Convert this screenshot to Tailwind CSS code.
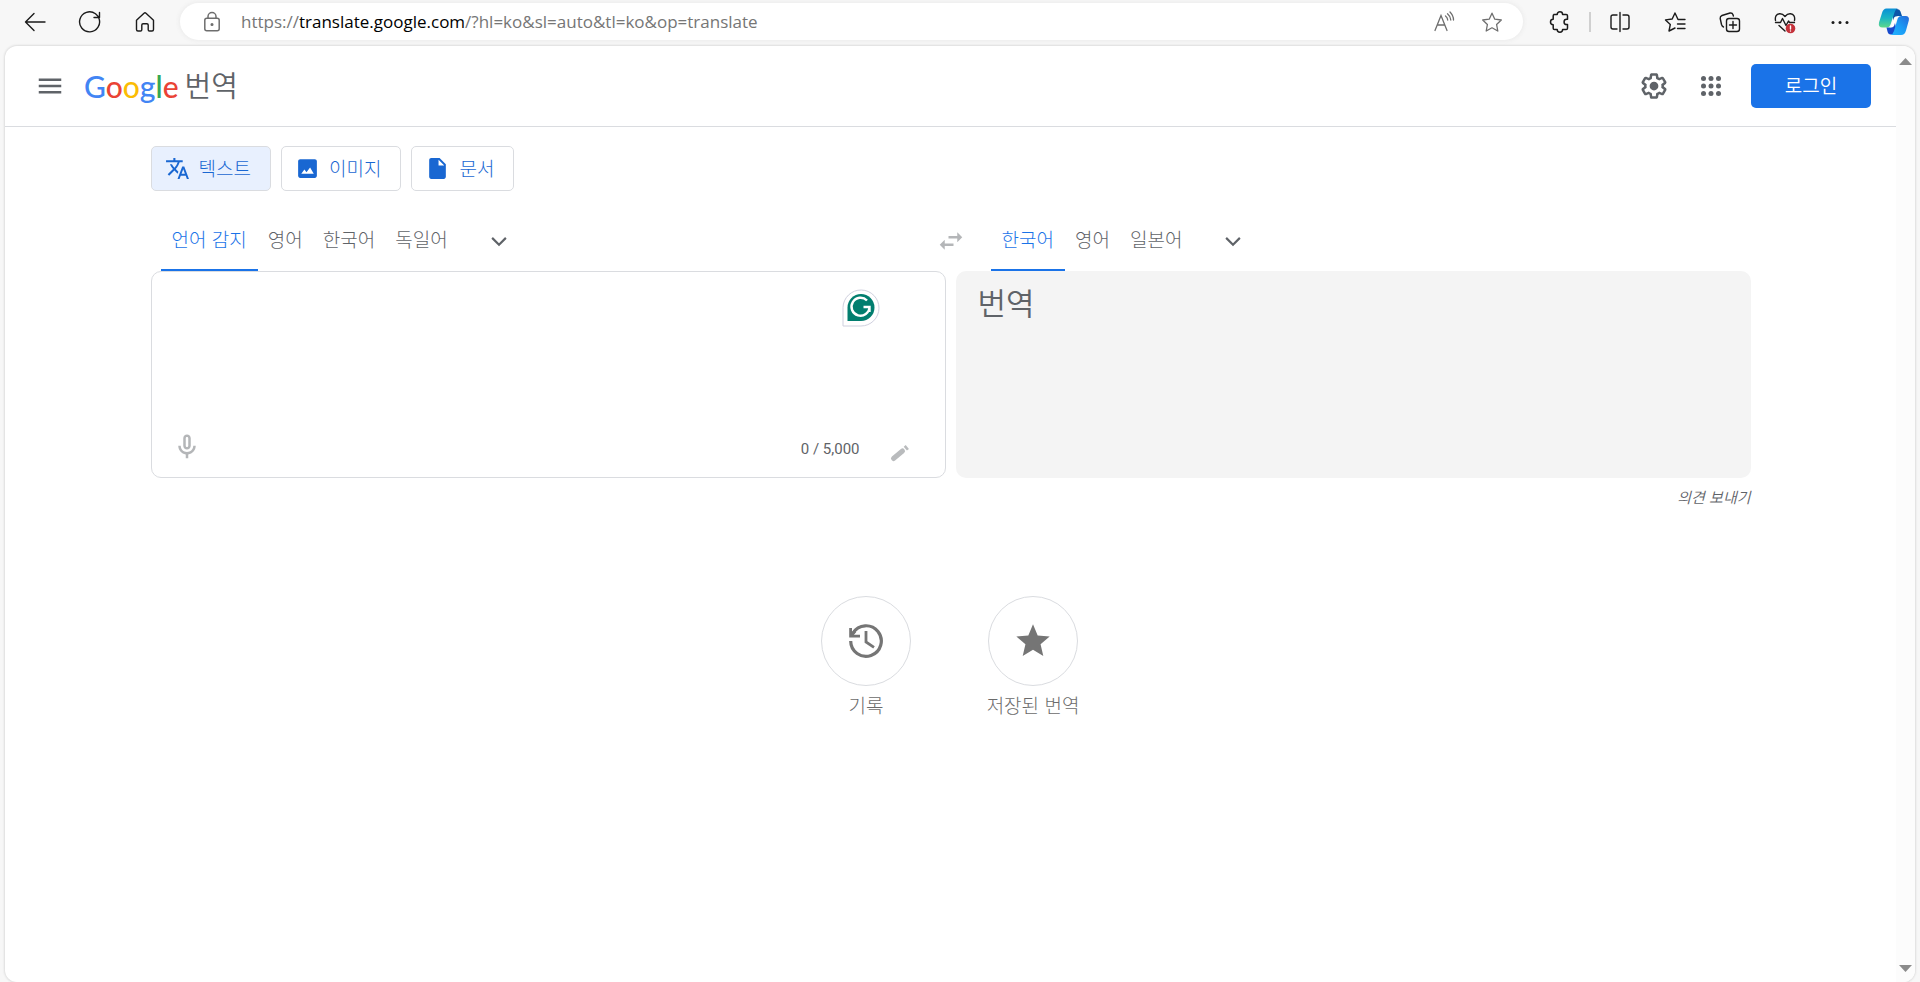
<!DOCTYPE html>
<html lang="ko">
<head>
<meta charset="utf-8">
<title>Google 번역</title>
<script src="https://cdn.jsdelivr.net/npm/@tailwindcss/browser@4"></script>
</head>
<body class="h-screen flex flex-col bg-[#f7f7f7] overflow-hidden font-['Noto_Sans_CJK_KR',sans-serif] text-[#5f6368]">

<!-- Browser toolbar -->
<div class="h-[46px] shrink-0 flex items-start pl-[7px] text-[#1b1b1b]">
  <button aria-label="뒤로" class="w-[55px] h-[43px] flex items-center justify-center">
    <svg class="size-6" viewBox="0 0 24 24" fill="none" stroke="currentColor" stroke-width="1.4" stroke-linecap="round" stroke-linejoin="round"><path d="M22 12H2.500M11 3.500L2.500 12l8.500 8.500"/></svg>
  </button>
  <button aria-label="새로 고침" class="w-[55px] h-[43px] flex items-center justify-center">
    <svg class="size-6" viewBox="0 0 24 24" fill="none" stroke="currentColor" stroke-width="1.4" stroke-linecap="round" stroke-linejoin="round"><path d="M20.800 8A10 10 0 1 1 17.500 3.800L21 7.200M21.500 2.500V7.500H16"/></svg>
  </button>
  <button aria-label="홈" class="w-[55px] h-[43px] flex items-center justify-center">
    <svg class="size-6" viewBox="0 0 24 24" fill="none" stroke="currentColor" stroke-width="1.4" stroke-linejoin="round"><path d="M3.500 10.300L11 3.300q1-.9 2 0l7.500 7V19.500q0 1.500-1.500 1.500h-2.500q-1.300 0-1.300-1.300V15q0-1.300-1.300-1.300h-3.800Q8.800 13.700 8.800 15v4.700Q8.800 21 7.500 21H5q-1.500 0-1.500-1.500z"/></svg>
  </button>
  <div class="ml-2 mt-[3px] flex-1 h-[37px] rounded-full bg-white shadow-[0_0_4px_1px_#ebebeb] flex items-center pl-5 pr-[7px] text-[#6e6e6e]">
    <svg class="size-6" viewBox="0 0 24 24" fill="none" stroke="currentColor" stroke-width="1.5"><rect x="4.800" y="8.300" width="14.400" height="12.500" rx="2"/><path d="M8 8V6.500a4 4 0 0 1 8 0V8"/><circle cx="12" cy="14.500" r=".8" fill="currentColor"/></svg>
    <div class="ml-[17px] flex-1 text-[17px] leading-6 whitespace-nowrap font-['Open_Sans','Noto_Sans',sans-serif] text-[#767676]">https://<span class="text-black">translate.google.com</span>/?hl=ko&amp;sl=auto&amp;tl=ko&amp;op=translate</div>
    <button aria-label="소리내어 읽기" class="w-12 flex items-center justify-center">
      <svg class="size-6" viewBox="0 0 24 24" fill="none" stroke="currentColor" stroke-width="1.3" stroke-linecap="round"><path d="M3 20.500L9 5.500 15 20.500M5.200 15h7.600M13.500 6q2 1.500 2.200 4M15.500 3.800q3 2.500 3.300 6.200M18 2q3.500 3.500 3.500 8"/></svg>
    </button>
    <button aria-label="즐겨찾기 추가" class="w-12 flex items-center justify-center">
      <svg class="size-6" viewBox="0 0 24 24" fill="none" stroke="currentColor" stroke-width="1.3" stroke-linejoin="round"><path d="M12 3.200l2.800 6 6.500.8-4.700 4.500 1.200 6.500-5.800-3.200L6.200 21l1.200-6.500L2.700 10l6.500-.8z"/></svg>
    </button>
  </div>
  <button aria-label="확장" class="ml-[9px] w-[55px] h-[43px] flex items-center justify-center">
    <svg class="size-6" viewBox="0 0 24 24" fill="none" stroke="currentColor" stroke-width="1.5" stroke-linejoin="round"><path d="M5.500 4.500h3.700a2.700 2.700 0 0 1 5.400 0h3.600q1.300 0 1.300 1.300v3.500h-.8a2.600 2.600 0 0 0 0 5.300h.8v3.700q0 1.300-1.300 1.300h-3.600a2.700 2.700 0 0 1-5.400 0H6.500q-1.300 0-1.300-1.300v-3.600a2.700 2.700 0 0 1 0-5.400V5.800q0-1.300 1.300-1.300"/></svg>
  </button>
  <span class="w-[5px] h-[43px] flex items-center justify-center"><span class="w-[2px] h-5 bg-[#d0d0d0]"></span></span>
  <button aria-label="화면 분할" class="w-[55px] h-[43px] flex items-center justify-center">
    <svg class="size-6" viewBox="0 0 24 24" fill="none" stroke="currentColor" stroke-width="1.4" stroke-linecap="round"><path d="M12 2.500v19M9 5H5Q3 5 3 7v10q0 2 2 2h4M15 5h4q2 0 2 2v10q0 2-2 2h-4"/></svg>
  </button>
  <button aria-label="즐겨찾기" class="w-[55px] h-[43px] flex items-center justify-center">
    <svg class="size-6" viewBox="0 0 24 24" fill="none" stroke="currentColor" stroke-width="1.4" stroke-linecap="round" stroke-linejoin="round"><path d="M22 9.500h-7L12 3 9.200 9l-6.700.9L7.300 14.500 6 21l6-3M14.500 14H22M14.500 18.500H22"/></svg>
  </button>
  <button aria-label="컬렉션" class="w-[55px] h-[43px] flex items-center justify-center">
    <svg class="size-6" viewBox="0 0 24 24" fill="none" stroke="currentColor" stroke-width="1.4" stroke-linecap="round" stroke-linejoin="round"><rect x="8.500" y="8.500" width="13" height="13" rx="2.500"/><path d="M15 11.500v7M11.500 15h7M5.500 17Q4 16.300 3.500 14.500L2.200 8.500Q2 6.300 4 5.500l8-2.500q2.300-.4 3 1.800l.4 1.200"/></svg>
  </button>
  <button aria-label="브라우저 필수 요소" class="w-[55px] h-[43px] flex items-center justify-center">
    <svg class="size-6" viewBox="0 0 24 24" fill="none" stroke="currentColor" stroke-width="1.4" stroke-linecap="round" stroke-linejoin="round"><path d="M2.500 10.500Q1.500 4.500 6.500 3.800q3-.3 5.500 2.700 2.500-3 5.500-2.700 5 .7 4 6.700M2.500 12.500h5l2-4 3.500 7 2.500-4.500 1 1.500h5M6 15.500l6 5.500"/><circle cx="17.500" cy="18.500" r="4.800" fill="#c4313a" stroke="none"/><path stroke="#fff" d="M17.500 16v3M17.500 21v.1"/></svg>
  </button>
  <button aria-label="설정 및 기타" class="w-[55px] h-[43px] flex items-center justify-center">
    <svg class="size-6" viewBox="0 0 24 24" fill="currentColor"><circle cx="5" cy="12.500" r="1.500"/><circle cx="12" cy="12.500" r="1.500"/><circle cx="19" cy="12.500" r="1.500"/></svg>
  </button>
  <button aria-label="Copilot" class="w-[53px] h-[43px] flex items-center justify-center">
    <svg class="size-8" viewBox="0 0 32 32">
      <defs>
        <linearGradient id="cpA" x1="0" y1="0" x2="0" y2="1"><stop offset="0" stop-color="#0a8fd6"/><stop offset=".5" stop-color="#1bb5c4"/><stop offset="1" stop-color="#5fd88a"/></linearGradient>
        <linearGradient id="cpB" x1="1" y1="0" x2="0" y2="1"><stop offset="0" stop-color="#2667d8"/><stop offset=".5" stop-color="#1a9bf5"/><stop offset="1" stop-color="#24b4ff"/></linearGradient>
      </defs>
      <path fill="#0b55a8" d="M15 3h4q2.800 0 3.500 2.500L24 10h-4q-2 0-3 3l-2 3z"/>
      <path fill="url(#cpA)" d="M8.500 2.500H20q-2.500.5-3.500 4l-3.800 11.500Q11.500 21.500 9 21.500H4.500Q0 21.500 1 16.500L4 7Q5.200 2.500 8.500 2.500z"/>
      <path fill="#1749cc" d="M8.500 21.500H12q1.800-.3 2.500-2.500l2-4 2 8.500-4 5H12.500q-2.300 0-3-3z"/>
      <path fill="url(#cpB)" d="M23 10h4.500q4.200 0 3.300 4.500L28 24.500Q26.800 29 23 29H12.500q2.500-.6 3.500-4l3.700-12.500Q20.500 10 23 10z"/>
      <path fill="#fff" d="M17.500 10.500h2.800q-1.500.5-2.100 2.500l-2 6.500q-.7 2-2.700 2h-2q1.500-.7 2.200-2.700l1.900-6q.6-2 1.900-2.300z"/>
    </svg>
  </button>
</div>

<!-- Page surface -->
<div class="flex-1 min-h-0 mx-[5px] flex rounded-xl bg-white overflow-hidden shadow-[0_0_2px_1px_#dedede]">
  <div class="flex-1 min-w-0">
    <header class="h-[81px] border-b border-[#dadce0] flex items-center pl-[30px] pr-[25px]">
      <button aria-label="기본 메뉴" class="size-[30px]">
        <svg class="size-[30px]" viewBox="0 0 24 24" fill="currentColor"><path d="M3 18h18v-2H3v2zm0-5h18v-2H3v2zm0-7v2h18V6H3z"/></svg>
      </button>
      <a href="#" class="ml-[19px] flex items-center gap-[6px] whitespace-nowrap">
        <span class="font-['Lato',sans-serif] text-[30px] leading-10 font-medium"><span class="text-[#4285f4]">G</span><span class="text-[#ea4335]">o</span><span class="text-[#fbbc04]">o</span><span class="text-[#4285f4]">g</span><span class="text-[#34a853]">l</span><span class="text-[#ea4335]">e</span></span>
        <span class="pb-1 text-[29px] leading-10 font-[350]">번역</span>
      </a>
      <button aria-label="설정" class="ml-auto size-[30px]">
        <svg class="size-[30px]" viewBox="0 0 24 24" fill="currentColor"><path d="M13.850 22.250h-3.700c-.74 0-1.360-.54-1.450-1.270l-.27-1.890c-.27-.14-.53-.29-.79-.46l-1.800.72c-.7.26-1.470-.03-1.810-.65L2.200 15.530c-.35-.66-.2-1.440.36-1.880l1.530-1.190c-.01-.15-.02-.3-.02-.46 0-.15.01-.31.02-.46l-1.520-1.190c-.59-.45-.74-1.260-.37-1.880l1.850-3.190c.34-.62 1.110-.9 1.790-.63l1.810.73c.26-.17.52-.32.78-.46l.27-1.910c.09-.7.710-1.250 1.440-1.250h3.700c.74 0 1.360.54 1.450 1.270l.27 1.890c.27.14.53.29.79.46l1.800-.72c.71-.26 1.480.03 1.820.65l1.840 3.180c.36.660.2 1.440-.36 1.880l-1.520 1.190c.01.15.02.3.02.46s-.01.31-.02.46l1.520 1.190c.56.45.72 1.230.37 1.860l-1.860 3.220c-.34.62-1.110.9-1.800.63l-1.800-.72c-.26.17-.52.32-.78.46l-.27 1.910c-.1.680-.72 1.220-1.460 1.220zm-3.230-2h2.760l.37-2.550.53-.22c.44-.18.880-.44 1.340-.78l.45-.34 2.380.96 1.380-2.400-2.030-1.580.07-.56c.03-.26.06-.51.06-.78s-.03-.53-.06-.78l-.07-.56 2.030-1.580-1.390-2.400-2.390.96-.45-.35c-.42-.32-.87-.58-1.330-.77l-.52-.22-.37-2.550h-2.760l-.37 2.550-.53.21c-.44.19-.88.440-1.340.79l-.45.33-2.380-.95-1.390 2.390 2.030 1.580-.07.56a7 7 0 0 0-.06.79c0 .26.02.53.06.78l.07.56-2.030 1.580 1.380 2.400 2.390-.96.45.35c.43.33.86.58 1.330.77l.53.22.38 2.550z"/><circle cx="12" cy="12" r="3.500"/></svg>
      </button>
      <button aria-label="Google 앱" class="ml-[27px] size-[30px]">
        <svg class="size-[30px]" viewBox="0 0 24 24" fill="currentColor"><circle cx="6" cy="6" r="2"/><circle cx="12" cy="6" r="2"/><circle cx="18" cy="6" r="2"/><circle cx="6" cy="12" r="2"/><circle cx="12" cy="12" r="2"/><circle cx="18" cy="12" r="2"/><circle cx="6" cy="18" r="2"/><circle cx="12" cy="18" r="2"/><circle cx="18" cy="18" r="2"/></svg>
      </button>
      <a href="#" class="ml-[25px] w-[120px] h-11 rounded-[5px] bg-[#1a73e8] text-white text-[19px] leading-[42px] text-center font-[350]">로그인</a>
    </header>

    <main class="max-w-[1600px] mx-auto pt-[19px]">
      <nav class="flex gap-[10px] text-[19px] leading-[41px] font-light text-[#1967d2]">
        <button class="h-[45px] flex items-center gap-[9px] pl-[13px] pr-[19px] border border-[#dadce0] rounded-[5px] bg-[#e8f0fe]">
          <svg class="size-[25px]" viewBox="0 0 24 24" fill="currentColor"><path d="M12.870 15.070l-2.540-2.510.03-.03c1.740-1.940 2.980-4.170 3.710-6.530H17V4h-7V2H8v2H1v1.990h11.170C11.500 7.920 10.440 9.750 9 11.350 8.070 10.320 7.300 9.190 6.690 8h-2c.73 1.630 1.730 3.170 2.980 4.560l-5.090 5.020L4 19l5-5 3.110 3.110.76-2.040zM18.500 10h-2L12 22h2l1.120-3h4.750L21 22h2l-4.500-12zm-2.620 7l1.620-4.330L19.120 17h-3.240z"/></svg>
          <span class="pb-[2px]">텍스트</span>
        </button>
        <button class="h-[45px] flex items-center gap-[9px] pl-[13px] pr-[19px] border border-[#dadce0] rounded-[5px]">
          <svg class="size-[25px]" viewBox="0 0 24 24" fill="currentColor"><path d="M21 19V5c0-1.100-.9-2-2-2H5c-1.100 0-2 .9-2 2v14c0 1.100.9 2 2 2h14c1.100 0 2-.9 2-2zM6 17l3-4 2 2.500 3.500-4.500L18 17z" fill-rule="evenodd"/></svg>
          <span class="pb-[2px]">이미지</span>
        </button>
        <button class="h-[45px] flex items-center gap-[9px] pl-[13px] pr-[19px] border border-[#dadce0] rounded-[5px]">
          <svg class="size-[25px]" viewBox="0 0 24 24" fill="currentColor"><path d="M6 2c-1.100 0-1.990.9-1.990 2L4 20c0 1.100.89 2 1.990 2H18c1.100 0 2-.9 2-2V8l-6-6H6zm7 7V3.500L18.500 9H13z"/></svg>
          <span class="pb-[2px]">문서</span>
        </button>
      </nav>

      <div class="mt-5 flex h-[60px] text-[19px] leading-[56px] font-light whitespace-nowrap">
        <div class="flex-1 flex pl-[10px]">
          <button class="h-[60px] px-[11px] pb-[2px] border-b-2 border-[#1a73e8] text-[#1a73e8]">언어 감지</button>
          <button class="px-[10px] pb-1">영어</button>
          <button class="px-[10px] pb-1">한국어</button>
          <button class="px-[10px] pb-1">독일어</button>
          <button aria-label="출발어 더보기" class="ml-4 w-[50px] flex items-center justify-center">
            <svg class="size-[30px]" viewBox="0 0 24 24" fill="none" stroke="currentColor" stroke-width="1.7"><path d="M6.500 9.500l5.500 5.500 5.500-5.500"/></svg>
          </button>
        </div>
        <button aria-label="언어 전환" class="w-[60px] flex items-center justify-center text-[#b4b6b8]">
          <svg class="size-[30px]" viewBox="0 0 24 24" fill="currentColor"><path d="M6.990 11L3 15l3.990 4v-3H14v-2H6.990v-3zM21 9l-3.990-4v3H10v2h7.010v3L21 9z"/></svg>
        </button>
        <div class="flex-1 flex pl-[10px]">
          <button class="h-[60px] px-[11px] pb-[2px] border-b-2 border-[#1a73e8] text-[#1a73e8]">한국어</button>
          <button class="px-[10px] pb-1">영어</button>
          <button class="px-[10px] pb-1">일본어</button>
          <button aria-label="도착어 더보기" class="ml-4 w-[50px] flex items-center justify-center">
            <svg class="size-[30px]" viewBox="0 0 24 24" fill="none" stroke="currentColor" stroke-width="1.7"><path d="M6.500 9.500l5.500 5.500 5.500-5.500"/></svg>
          </button>
        </div>
      </div>

      <div class="grid grid-cols-2 gap-[10px]">
        <section class="h-[207px] border border-[#dadce0] rounded-[10px] flex flex-col justify-between">
          <div class="flex pl-5 pr-[65px] pt-4">
            <textarea aria-label="원본 텍스트" class="flex-1 h-[110px] resize-none outline-none text-[30px]"></textarea>
            <svg class="w-[38px] h-[39px]" viewBox="0 0 38 39" fill="none"><path d="M1 38V19.500A18 18 0 1 1 19 38z" fill="#fff" stroke="#cfd0de"/><path d="M5.500 33V19.500A13.500 13.500 0 1 1 19 33z" fill="#027e6f"/><path d="M25 12.500A9 9 0 1 0 27.500 19h-6M27.500 18.500V24" stroke="#fff" stroke-width="2.400"/></svg>
          </div>
          <div class="flex items-center pl-5 pr-[33px] pb-3">
            <button aria-label="음성으로 번역" class="size-[30px] text-[#b4b6b8]">
              <svg class="size-[30px]" viewBox="0 0 24 24" fill="currentColor"><path fill-rule="evenodd" d="M12 14c1.660 0 3-1.340 3-3V5c0-1.660-1.340-3-3-3S9 3.340 9 5v6c0 1.660 1.340 3 3 3zm-1-9c0-.55.45-1 1-1s1 .45 1 1v6c0 .55-.45 1-1 1s-1-.45-1-1V5zM17 11c0 2.760-2.240 5-5 5s-5-2.240-5-5H5c0 3.530 2.610 6.430 6 6.920V21h2v-3.080c3.390-.49 6-3.390 6-6.920h-2z"/></svg>
            </button>
            <span class="ml-auto mt-1 font-['Roboto',sans-serif] text-[15px] leading-5">0 / 5,000</span>
            <button aria-label="손글씨 입력" class="ml-7 mt-3 size-6 text-[#b9bbbd]">
              <svg class="size-6" viewBox="0 0 24 24" fill="none" stroke="currentColor" stroke-width="5" stroke-linecap="round"><path d="M5.500 17.500L14.500 10"/><path stroke-linecap="butt" d="M17.300 7.700L19.300 6"/></svg>
            </button>
          </div>
        </section>
        <section class="h-[207px] rounded-[10px] bg-[#f4f4f4] px-[22px] pt-2 text-[31px] leading-[46px] font-[350]">번역</section>
      </div>

      <div class="mt-2 flex justify-end">
        <a href="#" class="text-[15px] leading-[22px] italic font-[350]">의견 보내기</a>
      </div>

      <div class="mt-[88px] pr-[2px] flex justify-center gap-[77px] text-[19px] leading-[38px] font-light text-[#6b6b6b] whitespace-nowrap">
        <button class="w-[90px] flex flex-col items-center">
          <span class="size-[90px] rounded-full border border-[#dadce0] flex items-center justify-center text-[#757575]">
            <svg class="size-9" viewBox="0 0 36 36" fill="none" stroke="currentColor" stroke-width="3.200"><path d="M2.700 18A15.300 15.300 0 1 0 5 10"/><path stroke-width="2.800" d="M2.600 5v8.200h9.400M18 8v11l8 5.300"/><path d="M3 13l4-5"/></svg>
          </span>
          <span>기록</span>
        </button>
        <button class="w-[90px] flex flex-col items-center">
          <span class="size-[90px] rounded-full border border-[#dadce0] flex items-center justify-center text-[#757575]">
            <svg class="size-10" viewBox="0 0 24 24" fill="currentColor"><path d="M12 17.270L18.180 21l-1.640-7.030L22 9.240l-7.190-.61L12 2 9.190 8.630 2 9.240l5.460 4.730L5.820 21z"/></svg>
          </span>
          <span>저장된 번역</span>
        </button>
      </div>
    </main>
  </div>

  <!-- Scrollbar track -->
  <div class="w-[19px] bg-[#fcfcfc] flex flex-col justify-between items-center pt-3 pb-[10px] text-[#8b8b8b]">
    <svg class="w-[13px] h-[7px]" viewBox="0 0 13 7" fill="currentColor"><path d="M0 7L6.500 0 13 7z"/></svg>
    <svg class="w-[13px] h-[7px]" viewBox="0 0 13 7" fill="currentColor"><path d="M0 0h13L6.500 7z"/></svg>
  </div>
</div>
</body>
</html>
